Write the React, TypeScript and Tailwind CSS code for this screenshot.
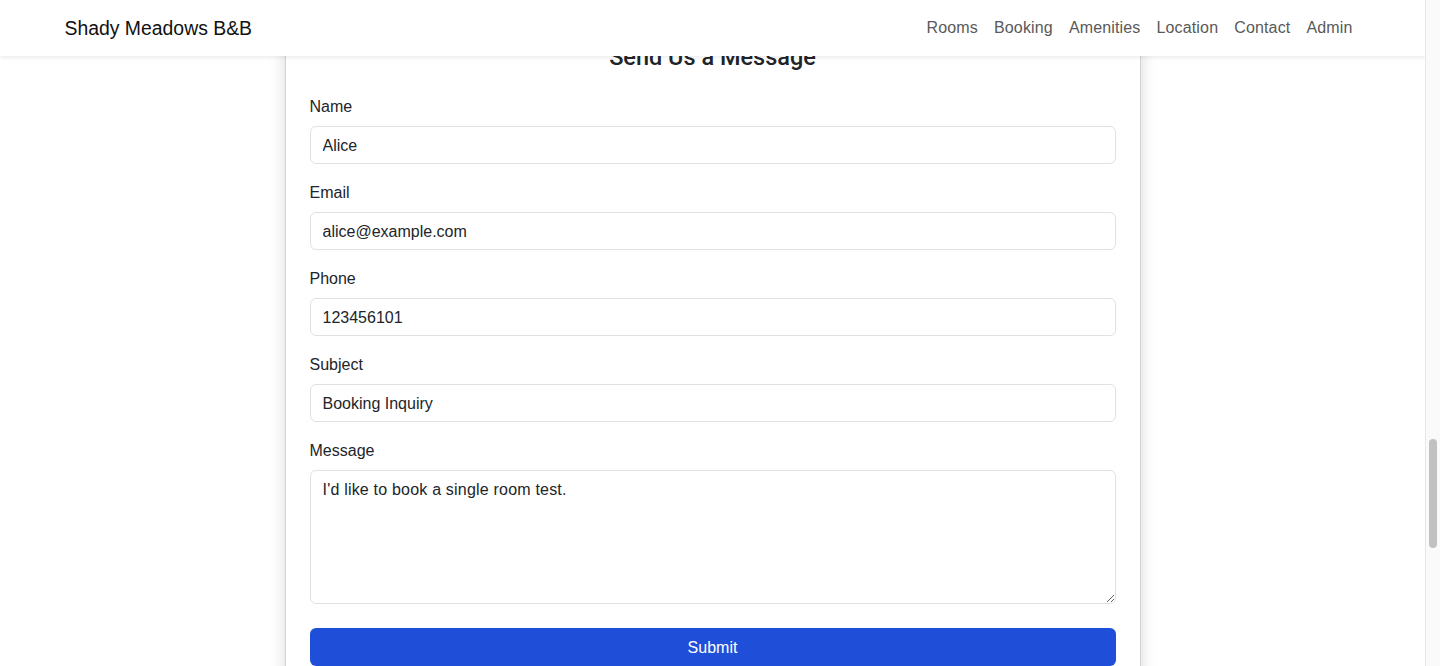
import React from "react";

const font = { fontFamily: '"Liberation Sans", Arial, sans-serif' };

function Field({ label, value }: { label: string; value: string }) {
  return (
    <div className="mb-4">
      <label className="block mb-2 pt-[1px] h-6 text-base leading-6 text-[#212529]">{label}</label>
      <input
        type="text"
        defaultValue={value}
        className="block w-full h-[38px] px-3 pt-[8px] pb-[6px] border border-[#dee2e6] rounded-md text-base leading-[22px] text-[#212529] bg-white outline-none"
        style={font}
      />
    </div>
  );
}

export default function App() {
  const links = ["Rooms", "Booking", "Amenities", "Location", "Contact", "Admin"];
  return (
    <div className="h-[666px] w-[1440px] overflow-hidden flex bg-white" style={font}>
      <div className="relative flex-1 overflow-hidden">
        <nav className="absolute top-0 left-0 right-0 z-10 h-14 bg-white shadow-[0_0.125rem_0.25rem_rgba(0,0,0,0.075)]">
          <div className="w-[1320px] mx-auto h-full px-3 flex items-center justify-between">
            <span className="text-[19.4px] leading-[30px] text-[#111]">Shady Meadows B&amp;B</span>
            <ul className="flex items-center">
              {links.map((l) => (
                <li key={l} className="px-2 text-base leading-6 text-[#595959] tracking-[0.15px]">
                  {l}
                </li>
              ))}
            </ul>
          </div>
        </nav>
        <div className="pt-4">
          <div className="mx-auto w-[856px] bg-white border border-[rgba(0,0,0,0.175)] rounded-md shadow-[0_0.5rem_1rem_rgba(0,0,0,0.15)] p-6">
            <h3
              className="text-center text-[23.5px] leading-[29px] pt-[2px] font-medium text-[#212529] mb-[22px]"
              style={{ fontFamily: 'Roboto, "Liberation Sans", Arial, sans-serif' }}
            >
              Send Us a Message
            </h3>
            <Field label="Name" value="Alice" />
            <Field label="Email" value="alice@example.com" />
            <Field label="Phone" value="123456101" />
            <Field label="Subject" value="Booking Inquiry" />
            <div className="mb-6">
              <label className="block mb-2 pt-[1px] h-6 text-base leading-6 text-[#212529]">Message</label>
              <textarea
                rows={5}
                defaultValue="I'd like to book a single room test."
                className="block w-full h-[134px] px-3 pt-[7px] pb-[5px] border border-[#dee2e6] rounded-md text-base leading-6 text-[#212529] bg-white outline-none tracking-[0.2px]"
                style={font}
              />
            </div>
            <button
              className="block w-full h-[38px] pt-[2px] rounded-md bg-[#1f4fd8] text-white text-base leading-6"
              style={font}
            >
              Submit
            </button>
          </div>
        </div>
      </div>
      <div className="w-[15px] h-full bg-[#fafafa] border-l border-[#e8e8e8] flex justify-center">
        <div className="mt-[439px] w-2 h-[109px] rounded-full bg-[#c1c1c1]" />
      </div>
    </div>
  );
}
